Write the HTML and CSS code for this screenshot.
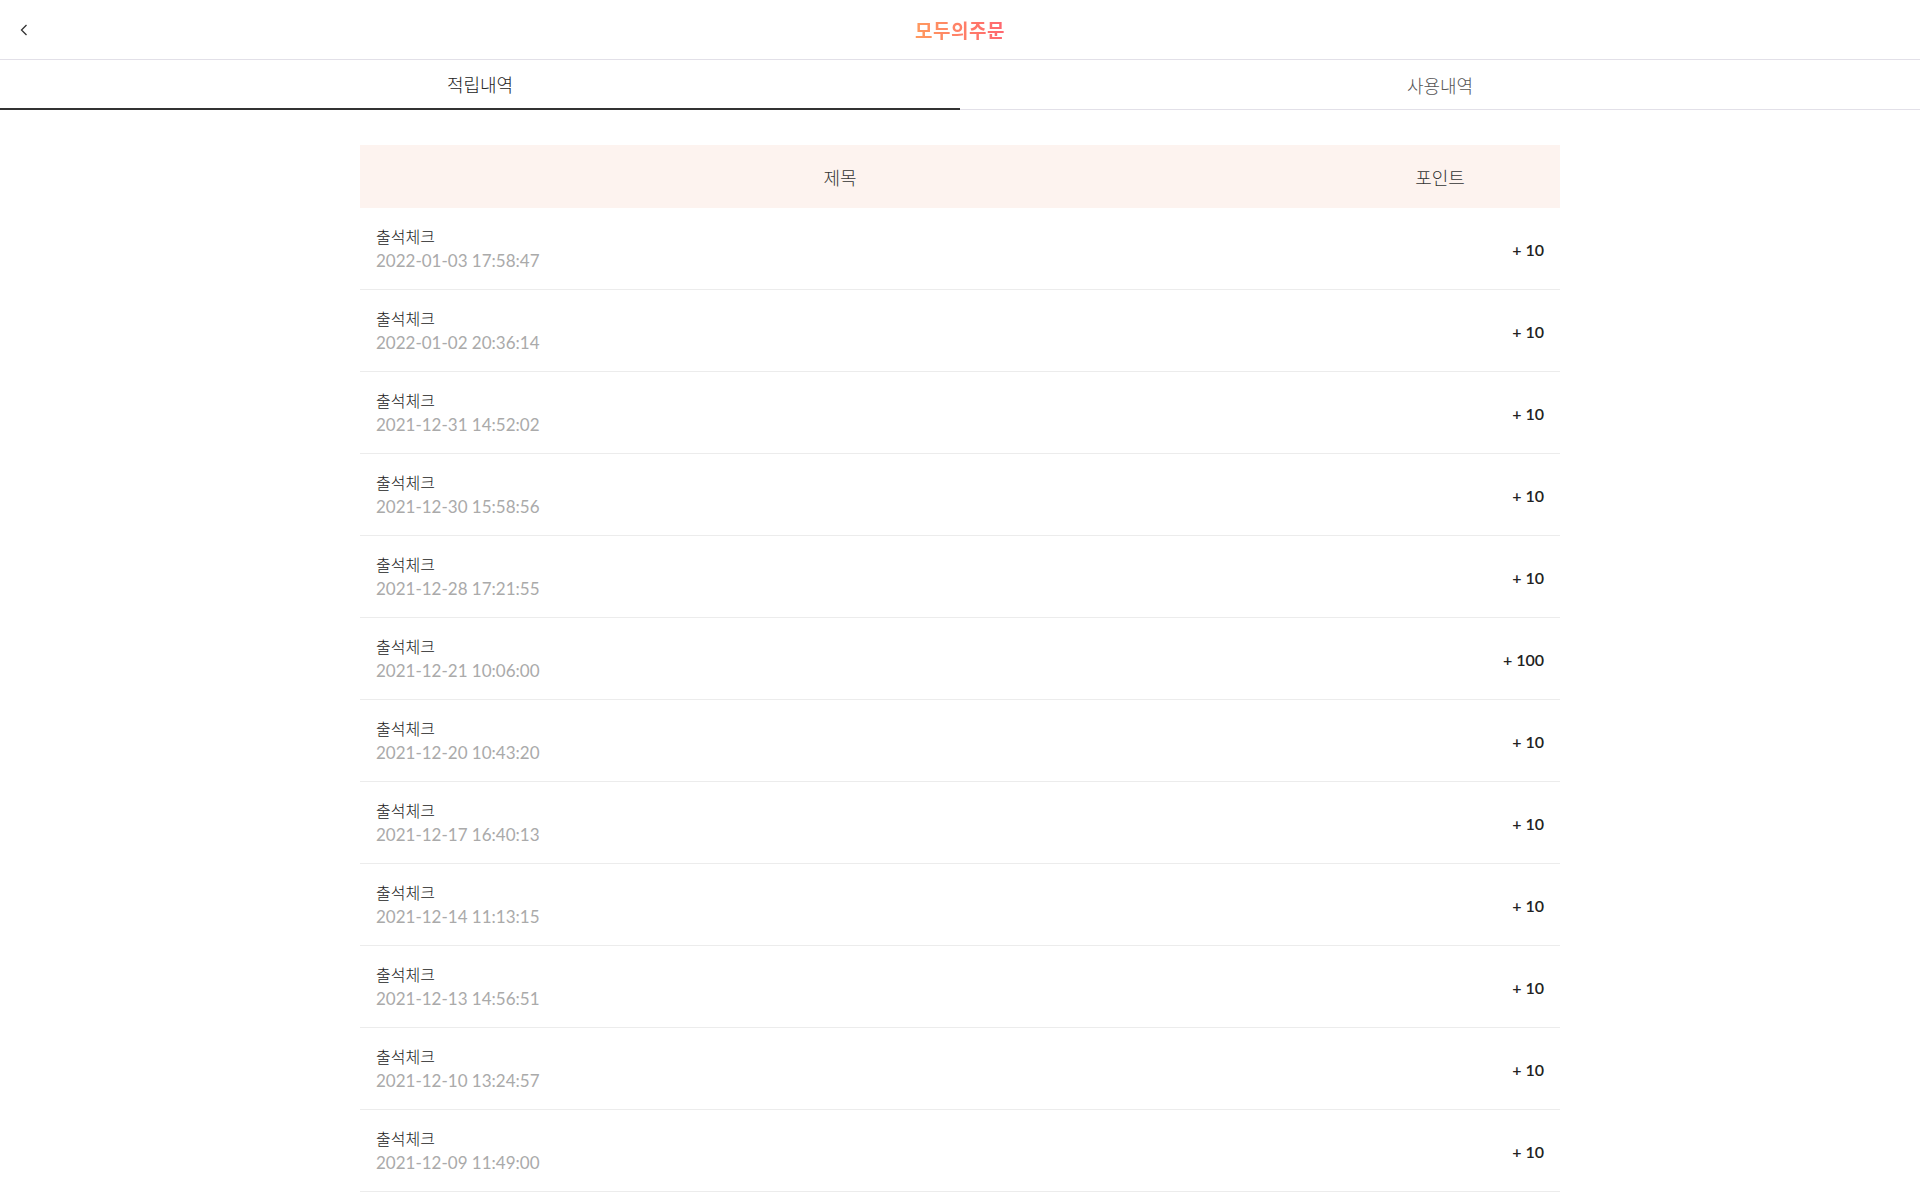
FILE: index.html
```html
<!DOCTYPE html>
<html lang="ko">
<head>
<meta charset="utf-8">
<title>모두의주문</title>
<link rel="stylesheet" href="styles.css">
</head>
<body>
<header class="topbar">
  <button class="back" aria-label="뒤로">
    <svg width="8" height="12" viewBox="0 0 8 12"><path d="M6.5 1 L1.5 6 L6.5 11" fill="none" stroke="#333" stroke-width="1.3"/></svg>
  </button>
  <h1 class="brand">모두의주문</h1>
</header>
<nav class="tabs">
  <a class="tab active">적립내역</a>
  <a class="tab">사용내역</a>
</nav>
<main class="content">
  <div class="table">
    <div class="thead">
      <div class="col-title">제목</div>
      <div class="col-point">포인트</div>
    </div>
    <div class="row"><div class="cell-title"><div class="name">출석체크</div><div class="date">2022-01-03 17:58:47</div></div><div class="cell-point">+ 10</div></div>
    <div class="row"><div class="cell-title"><div class="name">출석체크</div><div class="date">2022-01-02 20:36:14</div></div><div class="cell-point">+ 10</div></div>
    <div class="row"><div class="cell-title"><div class="name">출석체크</div><div class="date">2021-12-31 14:52:02</div></div><div class="cell-point">+ 10</div></div>
    <div class="row"><div class="cell-title"><div class="name">출석체크</div><div class="date">2021-12-30 15:58:56</div></div><div class="cell-point">+ 10</div></div>
    <div class="row"><div class="cell-title"><div class="name">출석체크</div><div class="date">2021-12-28 17:21:55</div></div><div class="cell-point">+ 10</div></div>
    <div class="row"><div class="cell-title"><div class="name">출석체크</div><div class="date">2021-12-21 10:06:00</div></div><div class="cell-point">+ 100</div></div>
    <div class="row"><div class="cell-title"><div class="name">출석체크</div><div class="date">2021-12-20 10:43:20</div></div><div class="cell-point">+ 10</div></div>
    <div class="row"><div class="cell-title"><div class="name">출석체크</div><div class="date">2021-12-17 16:40:13</div></div><div class="cell-point">+ 10</div></div>
    <div class="row"><div class="cell-title"><div class="name">출석체크</div><div class="date">2021-12-14 11:13:15</div></div><div class="cell-point">+ 10</div></div>
    <div class="row"><div class="cell-title"><div class="name">출석체크</div><div class="date">2021-12-13 14:56:51</div></div><div class="cell-point">+ 10</div></div>
    <div class="row"><div class="cell-title"><div class="name">출석체크</div><div class="date">2021-12-10 13:24:57</div></div><div class="cell-point">+ 10</div></div>
    <div class="row"><div class="cell-title"><div class="name">출석체크</div><div class="date">2021-12-09 11:49:00</div></div><div class="cell-point">+ 10</div></div>
  </div>
</main>
</body>
</html>
```
FILE: styles.css
```css
html, body {
  margin: 0;
  padding: 0;
  background: #fff;
}
body {
  font-family: Lato, "Noto Sans CJK KR", sans-serif;
  color: #222;
  font-size: 16px;
}
.topbar {
  height: 59px;
  border-bottom: 1px solid #e2e0e8;
  display: flex;
  align-items: center;
  justify-content: center;
  position: relative;
}
.back {
  position: absolute;
  left: 16px;
  top: 22px;
  width: 16px;
  height: 16px;
  padding: 0;
  border: 0;
  background: none;
  display: flex;
  align-items: center;
  justify-content: center;
}
.brand {
  margin: 0;
  font-family: "Noto Sans CJK KR", sans-serif;
  font-size: 19px;
  font-weight: 700;
  letter-spacing: 0.5px;
  background: linear-gradient(90deg, #ff9a5e, #ff6670);
  -webkit-background-clip: text;
  background-clip: text;
  color: transparent;
}
.tabs {
  display: flex;
  height: 50px;
}
.tab {
  flex: 1;
  display: flex;
  align-items: center;
  justify-content: center;
  font-family: "Noto Sans CJK KR", sans-serif;
  font-size: 18px;
  font-weight: 300;
  color: #555;
  border-bottom: 1px solid #e2e0e8;
  box-sizing: border-box;
}
.tab.active {
  color: #222;
  border-bottom: 2px solid #333;
}
.content {
  padding-top: 35px;
  display: flex;
  justify-content: center;
}
.table {
  width: 1200px;
}
.thead {
  display: flex;
  height: 63px;
  align-items: center;
  background: #fdf3ef;
  font-family: "Noto Sans CJK KR", sans-serif;
  font-size: 18px;
  font-weight: 300;
  color: #333;
}
.col-title {
  flex: 0 0 960px;
  text-align: center;
}
.col-point {
  flex: 1;
  text-align: center;
}
.row {
  display: flex;
  align-items: center;
  padding: 16px 16px 15px;
  border-bottom: 1px solid #ececec;
}
.cell-title {
  flex: 1;
}
.name {
  font-family: "Noto Sans CJK KR", sans-serif;
  font-size: 16px;
  font-weight: 300;
  line-height: 24px;
  color: #222;
}
.date {
  font-size: 17px;
  line-height: 26px;
  color: #aaa;
}
.cell-point {
  font-size: 16px;
  font-weight: 600;
  color: #222;
}
```
